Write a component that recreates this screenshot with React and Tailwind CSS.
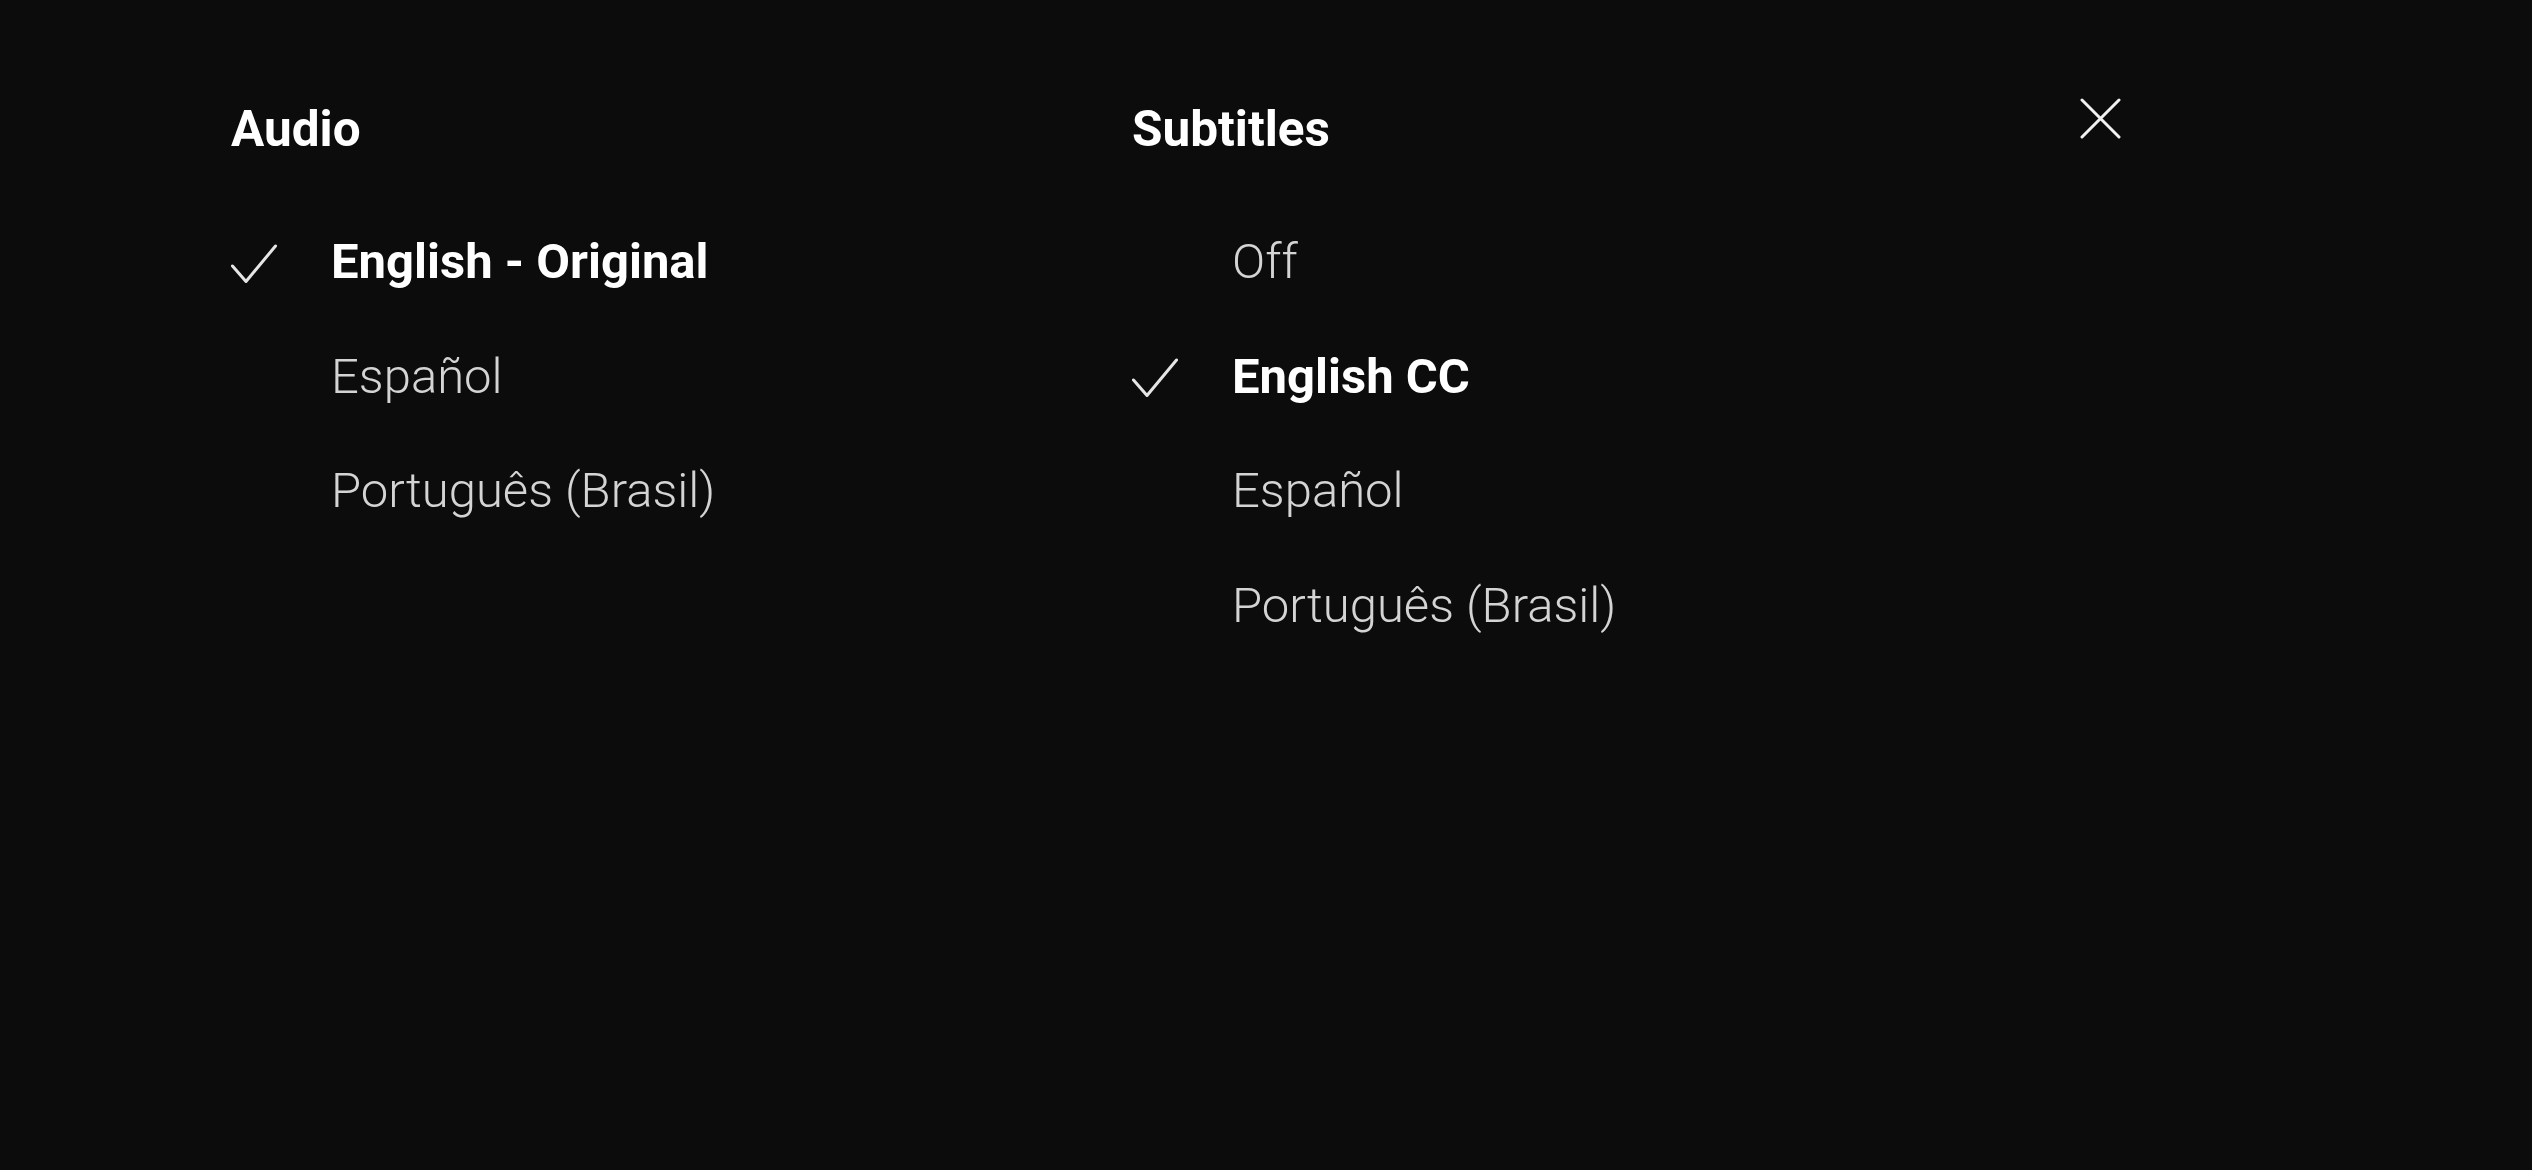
const audio = [
    { label: "English - Original", selected: true },
    { label: "Español" },
    { label: "Português (Brasil)" },
];

const subtitles = [
    { label: "Off" },
    { label: "English CC", selected: true },
    { label: "Español" },
    { label: "Português (Brasil)" },
];

const Check = () => (
    <svg viewBox="0 0 46 40" className="w-[46px] h-[40px]" fill="none">
        <path d="M1.5 22 L15 37.5 L44.5 2" stroke="#e6e6e6" strokeWidth="3" strokeLinecap="round" strokeLinejoin="round" />
    </svg>
);

const OptionList = ({ title, options, className }) => (
    <div className={className}>
        <h2 className="text-[49.5px] leading-[48px] font-bold text-white">{title}</h2>
        <ul className="mt-[85px] flex flex-col gap-[66.5px]">
            {options.map((opt) => (
                <li key={opt.label} className="flex items-center h-[48px]">
                    <span className="w-[100px] flex items-center pt-[3px]">
                        {opt.selected && <Check />}
                    </span>
                    <span
                        className={`text-[49px] leading-[48px] ${opt.selected ? "font-bold text-white" : "font-light text-[#d4d4d4]"}`}
                    >
                        {opt.label}
                    </span>
                </li>
            ))}
        </ul>
    </div>
);

export default function App() {
    return (
        <div
            className="w-[2532px] h-[1170px] bg-[#0c0c0c] overflow-hidden"
            style={{ fontFamily: "Roboto, 'Noto Sans', sans-serif" }}
        >
            <div className="flex pt-[105px] pl-[231px]">
                <OptionList title="Audio" options={audio} className="w-[901px]" />
                <OptionList title="Subtitles" options={subtitles} className="w-[948px]" />
                <button className="-mt-[7px] w-[41px] h-[41px] self-start">
                    <svg viewBox="0 0 41 41" className="w-[41px] h-[41px]" fill="none">
                        <path d="M2 2 L39 39 M39 2 L2 39" stroke="#f2f2f2" strokeWidth="3" strokeLinecap="round" />
                    </svg>
                </button>
            </div>
        </div>
    );
}
